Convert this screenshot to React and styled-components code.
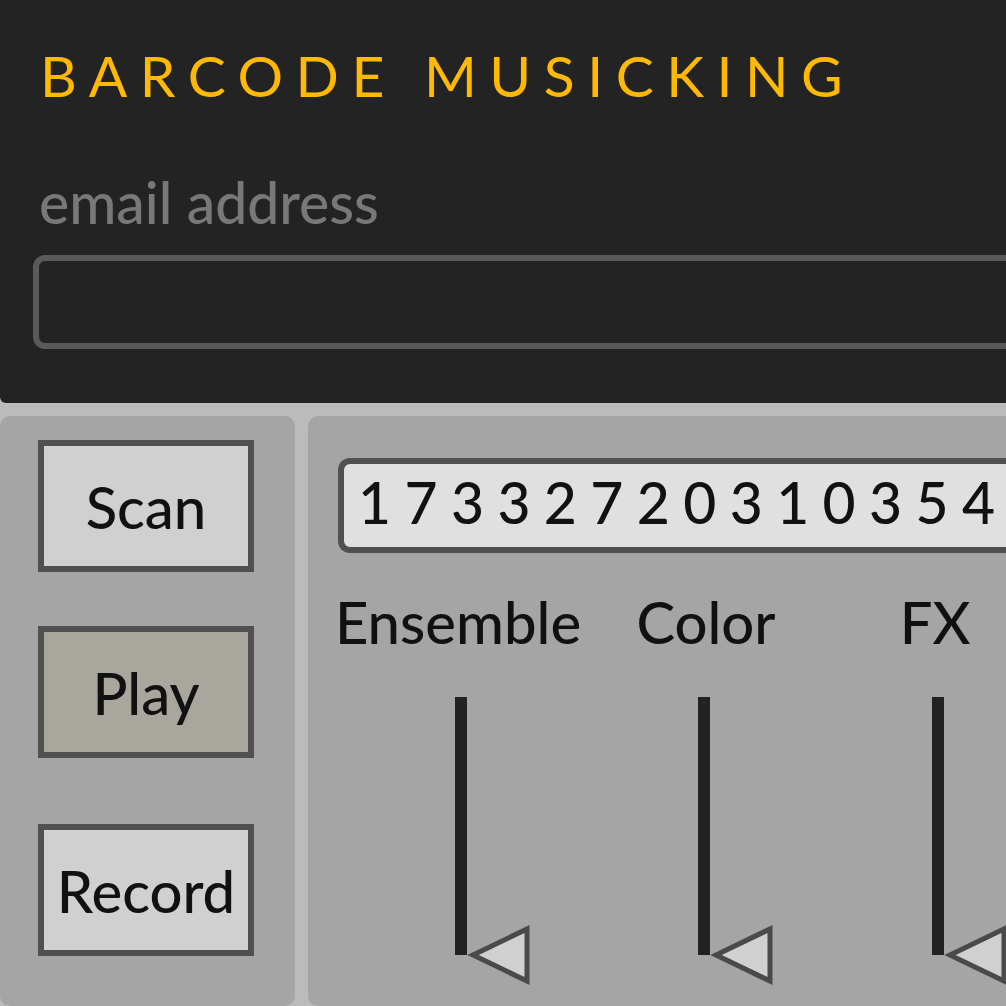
import styled, { createGlobalStyle } from 'styled-components';

const GlobalStyle = createGlobalStyle`
    html, body {
        margin: 0;
        padding: 0;
        background: #bbbbbb;
        overflow: hidden;
    }

    body {
        font-family: Lato, "Open Sans", sans-serif;
    }
`;

const sliders = [
    { label: 'Ensemble', shift: 6 },
    { label: 'Color', shift: -4 },
    { label: 'FX', shift: 6 }
];

const App = () => {
    return (
        <>
            <GlobalStyle />
            <Page>
                <Header>
                    <Title>BARCODE MUSICKING</Title>
                    <FieldLabel>email address</FieldLabel>
                    <EmailInput />
                </Header>
                <Body>
                    <ButtonPanel>
                        <Button>Scan</Button>
                        <Button $active>Play</Button>
                        <Button $offset={12}>Record</Button>
                    </ButtonPanel>
                    <MainPanel>
                        <NumberField>17332720310354</NumberField>
                        <SliderRow>
                            {sliders.map((s) => (
                                <SliderCol key={s.label}>
                                    <SliderLabel>{s.label}</SliderLabel>
                                    <Track $shift={s.shift}>
                                        <Thumb viewBox="0 0 64 64">
                                            <polygon
                                                points="6,32 60,6 60,58"
                                                fill="#d0d0d0"
                                                stroke="#4a4a4a"
                                                strokeWidth="5"
                                            />
                                        </Thumb>
                                    </Track>
                                </SliderCol>
                            ))}
                        </SliderRow>
                    </MainPanel>
                </Body>
            </Page>
        </>
    );
};

export default App;

const Page = styled.div`
    width: 1120px;
    height: 1006px;
`;

const Header = styled.div`
    background: #232323;
    border-bottom-left-radius: 6px;
    padding: 47px 0 54px 33px;
    display: flex;
    flex-direction: column;
`;

const Title = styled.div`
    color: #ffb900;
    font-size: 57px;
    line-height: 1;
    letter-spacing: 12.5px;
    margin-left: 7px;
    white-space: nowrap;
`;

const FieldLabel = styled.div`
    color: #787878;
    font-size: 57px;
    font-weight: 500;
    line-height: 1;
    margin: 70px 0 0 6px;
`;

const EmailInput = styled.div`
    margin-top: 24px;
    height: 94px;
    box-sizing: border-box;
    border: 6px solid #5a5a5a;
    border-radius: 12px;
    background: #232323;
`;

const Body = styled.div`
    display: flex;
    gap: 13px;
    margin-top: 13px;
`;

const Panel = styled.div`
    background: #a5a5a5;
    border-radius: 10px;
    height: 590px;
    box-sizing: border-box;
`;

const ButtonPanel = styled(Panel)`
    width: 295px;
    padding: 24px 0 0 38px;
    display: flex;
    flex-direction: column;
    gap: 54px;
`;

const Button = styled.div`
    width: 216px;
    height: 132px;
    box-sizing: border-box;
    border: 6px solid #505050;
    background: ${(p) => (p.$active ? '#a9a69e' : '#d0d0d0')};
    color: #111;
    font-size: 58px;
    font-weight: 500;
    display: flex;
    align-items: center;
    justify-content: center;
    margin-top: ${(p) => p.$offset || 0}px;
`;

const MainPanel = styled(Panel)`
    flex: 1;
    padding: 42px 0 0 30px;
    border-top-right-radius: 0;
    border-bottom-right-radius: 0;
`;

const NumberField = styled.div`
    height: 95px;
    box-sizing: border-box;
    border: 6px solid #505050;
    border-right: none;
    border-radius: 12px 0 0 12px;
    background: #e0e0e0;
    color: #111;
    font-size: 57px;
    font-weight: 500;
    line-height: 76px;
    padding: 0 0 7px 14px;
    letter-spacing: 13.4px;
    white-space: nowrap;
`;

const SliderRow = styled.div`
    display: grid;
    grid-template-columns: 240px 256px 202px;
    margin-top: 40px;
`;

const SliderCol = styled.div`
    display: flex;
    flex-direction: column;
    align-items: center;
`;

const SliderLabel = styled.div`
    color: #111;
    font-size: 58px;
    font-weight: 500;
    line-height: 1;
    white-space: nowrap;
`;

const Track = styled.div`
    position: relative;
    width: 12px;
    height: 258px;
    margin-top: 46px;
    margin-left: ${(p) => p.$shift}px;
    background: #222;
`;

const Thumb = styled.svg`
    position: absolute;
    left: 12px;
    top: 226px;
    width: 64px;
    height: 64px;
    overflow: visible;
`;
